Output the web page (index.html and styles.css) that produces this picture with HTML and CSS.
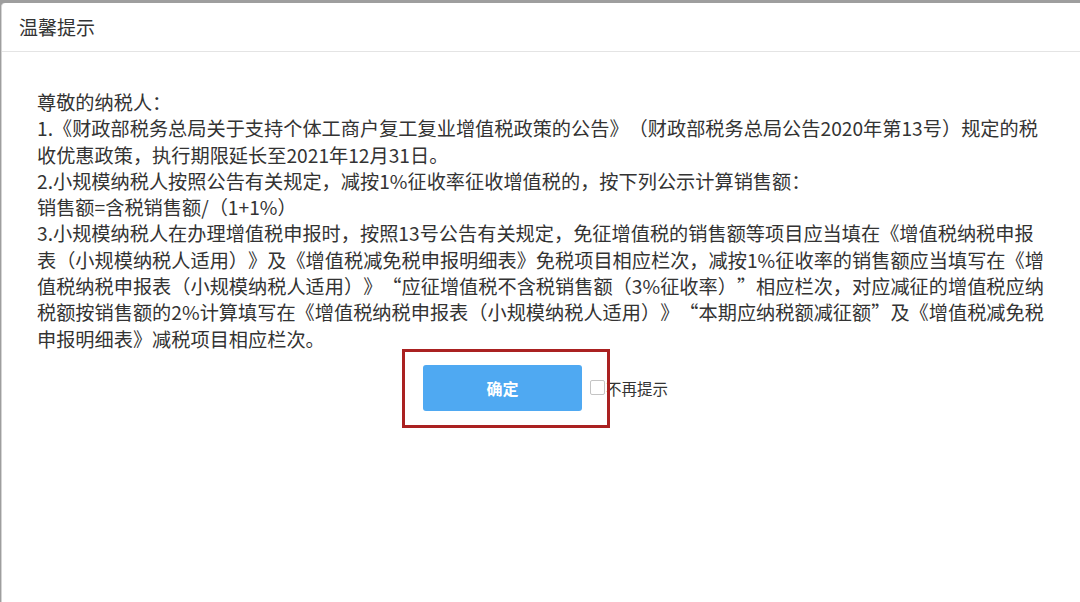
FILE: index.html
```html
<!DOCTYPE html>
<html lang="zh-CN">
<head>
<meta charset="utf-8">
<title>温馨提示</title>
<link rel="stylesheet" href="styles.css">
</head>
<body>
<div class="dialog">
  <div class="dialog-header">温馨提示</div>
  <div class="dialog-body">
    <div class="notice">
      <p>尊敬的纳税人：</p>
      <p>1.《财政部税务总局关于支持个体工商户复工复业增值税政策的公告》（财政部税务总局公告2020年第13号）规定的税收优惠政策，执行期限延长至2021年12月31日。</p>
      <p>2.小规模纳税人按照公告有关规定，减按1%征收率征收增值税的，按下列公示计算销售额：</p>
      <p>销售额=含税销售额/（1+1%）</p>
      <p>3.小规模纳税人在办理增值税申报时，按照13号公告有关规定，免征增值税的销售额等项目应当填在《增值税纳税申报表（小规模纳税人适用）》及《增值税减免税申报明细表》免税项目相应栏次，减按1%征收率的销售额应当填写在《增值税纳税申报表（小规模纳税人适用）》“应征增值税不含税销售额（3%征收率）”相应栏次，对应减征的增值税应纳税额按销售额的2%计算填写在《增值税纳税申报表（小规模纳税人适用）》“本期应纳税额减征额”及《增值税减免税申报明细表》减税项目相应栏次。</p>
    </div>
    <div class="actions">
      <div class="action-group">
        <button class="btn-primary" type="button">确定</button>
        <label class="no-remind"><input class="check" type="checkbox">不再提示</label>
        <span class="highlight"></span>
      </div>
    </div>
  </div>
</div>
</body>
</html>
```

FILE: styles.css
```css
html, body {
  margin: 0;
  padding: 0;
}
body {
  background: #9e9e9e;
  font-family: "Noto Sans CJK SC", "Microsoft YaHei", sans-serif;
  color: #333;
  overflow: hidden;
  height: 602px;
}
.dialog {
  margin: 3px 0 0 1px;
  background: #fff;
  border-left: 1px solid #d4d4d4;
  border-top-left-radius: 4px;
  height: 620px;
}
.dialog-header {
  height: 48px;
  line-height: 48px;
  padding-left: 17px;
  font-size: 19px;
  color: #333;
  border-bottom: 1px solid #e4e4e4;
}
.dialog-body {
  padding: 37px 30px 0 35px;
}
.notice {
  font-size: 19.2px;
  line-height: 26.3px;
  color: #333;
  text-spacing-trim: space-all;
}
.notice p {
  margin: 0;
}
.actions {
  display: flex;
  justify-content: center;
  margin-top: 13px;
  padding-left: 4px;
}
.action-group {
  position: relative;
  display: flex;
  align-items: center;
}
.btn-primary {
  width: 159px;
  height: 46px;
  border: none;
  border-radius: 3px;
  background: #4fa9f2;
  color: #fff;
  font-family: "Noto Sans CJK SC", sans-serif;
  font-size: 16px;
  font-weight: bold;
  padding: 0;
}
.no-remind {
  display: flex;
  align-items: center;
  margin-left: 8px;
  font-size: 15.5px;
  color: #333;
}
.check {
  appearance: none;
  -webkit-appearance: none;
  width: 15px;
  height: 15px;
  margin: 0 1px 0 0;
  border: 1px solid #c4c4c4;
  border-radius: 2px;
  background: #fff;
  box-sizing: border-box;
}
.highlight {
  position: absolute;
  left: -21px;
  top: -16px;
  width: 208px;
  height: 79px;
  border: 3px solid #aa2121;
  box-sizing: border-box;
  pointer-events: none;
}
```
